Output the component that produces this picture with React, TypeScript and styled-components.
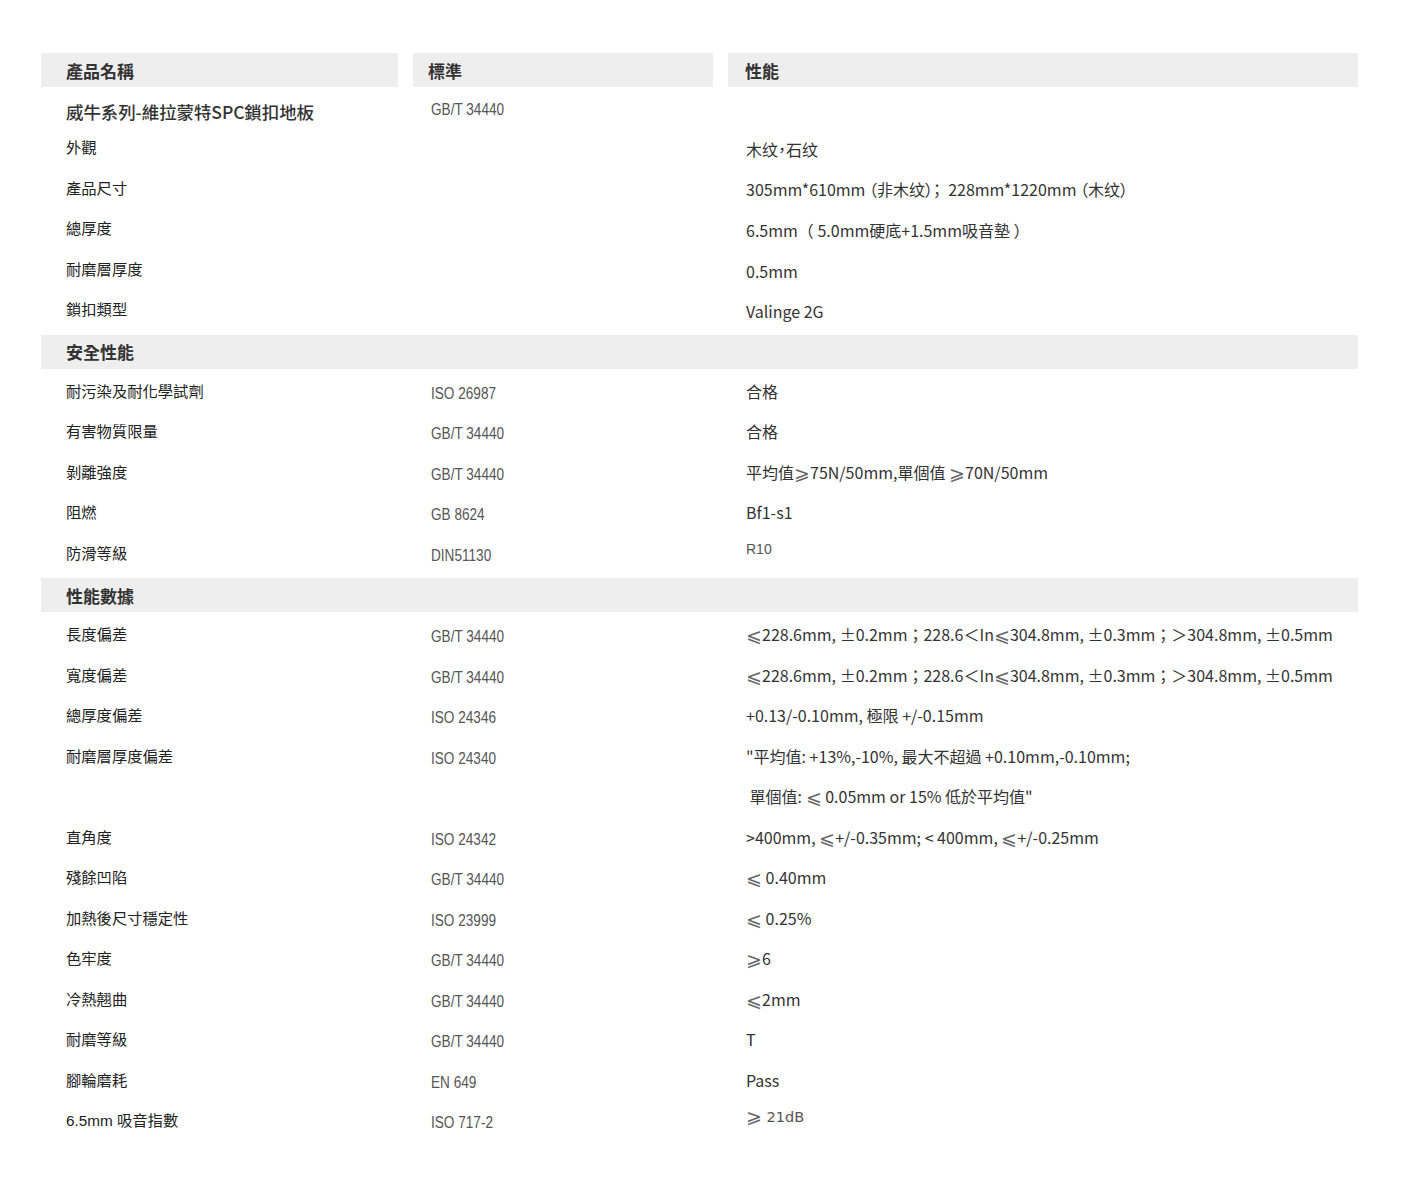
import React from 'react';
import styled, { createGlobalStyle } from 'styled-components';

const GlobalStyle = createGlobalStyle`
  html, body {
    margin: 0;
    padding: 0;
    background: #fff;
  }
  body {
    font-family: "Noto Sans CJK TC", "Noto Sans", sans-serif;
    color: #333;
  }
`;

const COLS = '357px 300px 630px';

const Page = styled.div`
  padding: 53px 48px 60px 41px;
`;

const Table = styled.div`
  width: 1317px;
  display: flex;
  flex-direction: column;
`;

const HeaderRow = styled.div`
  display: grid;
  grid-template-columns: ${COLS};
  column-gap: 15px;
  height: 34px;
`;

const HeaderCell = styled.div<{ $pad: number }>`
  background: #eeeeee;
  display: flex;
  align-items: center;
  padding-left: ${p => p.$pad}px;
  font-size: 17px;
  font-weight: 700;
  color: #333;
`;

const SectionRow = styled.div`
  background: #eeeeee;
  height: 34px;
  margin: 5px 0 2px;
  display: flex;
  align-items: center;
  padding-left: 25px;
  font-size: 17px;
  font-weight: 700;
  color: #333;
`;

const TitleRow = styled.div`
  display: grid;
  grid-template-columns: ${COLS};
  column-gap: 15px;
  height: 40px;
`;

const TitleName = styled.div`
  padding: 12px 0 0 25px;
  font-size: 17.5px;
  line-height: 26px;
  font-weight: 500;
  color: #333;
  letter-spacing: -0.1px;
`;

const TitleStd = styled.div`
  padding: 11px 0 0 18px;
  line-height: 20px;
`;

const DataRow = styled.div`
  display: grid;
  grid-template-columns: ${COLS};
  column-gap: 15px;
  height: 40.5px;
  align-items: center;
`;

const NameCell = styled.div`
  padding-left: 25px;
  font-family: "Liberation Sans", "Noto Sans CJK TC", sans-serif;
  font-size: 15.3px;
  color: #222;
  white-space: nowrap;
  transform: translateY(-1px);
`;

const StdCell = styled.div`
  padding-left: 18px;
  transform: translateY(1px);
`;

/* narrow grotesque look of the standards column */
const StdText = styled.span`
  display: inline-block;
  font-family: "Liberation Sans", sans-serif;
  font-size: 16px;
  color: #555;
  white-space: nowrap;
  transform: scaleX(0.85);
  transform-origin: left center;
`;

const ValueCell = styled.div<{ $font?: 'arial' | 'dejavu'; $shift?: number; $palt?: boolean }>`
  padding-left: 18px;
  font-family: ${p =>
    p.$font === 'arial'
      ? '"Liberation Sans", sans-serif'
      : p.$font === 'dejavu'
      ? '"DejaVu Sans", sans-serif'
      : '"Noto Sans CJK TC", "Noto Sans", "DejaVu Sans", sans-serif'};
  font-size: ${p => (p.$font === 'arial' ? '14px' : p.$font === 'dejavu' ? '14.5px' : '16px')};
  color: ${p => (p.$font ? '#555' : '#333')};
  white-space: pre;
  font-feature-settings: ${p => (p.$palt ? '"palt"' : 'normal')};
  transform: translateY(${p => p.$shift ?? 0}px);
`;

const Rel = styled.span`
  font-family: "DejaVu Sans", sans-serif;
  font-size: 19px;
  font-weight: 200;
  line-height: 0;
  vertical-align: -1px;
  color: #666;
`;

type Row = {
  name?: string;
  std?: string;
  value?: string;
  font?: 'arial' | 'dejavu';
  shift?: number;
  palt?: boolean;
};

const product: Row[] = [
  { name: '外觀', value: '木纹，石纹', shift: 2, palt: true },
  { name: '產品尺寸', value: '305mm*610mm （非木纹）；  228mm*1220mm （木纹）', shift: 1, palt: true },
  { name: '總厚度', value: '6.5mm（ 5.0mm硬底+1.5mm吸音墊 ）', shift: 2 },
  { name: '耐磨層厚度', value: '0.5mm', shift: 2 },
  { name: '鎖扣類型', value: 'Valinge 2G', shift: 2 },
];

const safety: Row[] = [
  { name: '耐污染及耐化學試劑', std: 'ISO 26987', value: '合格' },
  { name: '有害物質限量', std: 'GB/T 34440', value: '合格' },
  { name: '剝離強度', std: 'GB/T 34440', value: '平均值⩾75N/50mm,單個值 ⩾70N/50mm' },
  { name: '阻燃', std: 'GB 8624', value: 'Bf1-s1' },
  { name: '防滑等級', std: 'DIN51130', value: 'R10', font: 'arial', shift: -4 },
];

const tolerance = '⩽228.6mm, ±0.2mm；228.6＜In⩽304.8mm, ±0.3mm；＞304.8mm, ±0.5mm';

const performance: Row[] = [
  { name: '長度偏差', std: 'GB/T 34440', value: tolerance },
  { name: '寬度偏差', std: 'GB/T 34440', value: tolerance },
  { name: '總厚度偏差', std: 'ISO 24346', value: '+0.13/-0.10mm, 極限 +/-0.15mm' },
  { name: '耐磨層厚度偏差', std: 'ISO 24340', value: '"平均值: +13%,-10%, 最大不超過 +0.10mm,-0.10mm;' },
  { value: ' 單個值: ⩽ 0.05mm or 15% 低於平均值"' },
  { name: '直角度', std: 'ISO 24342', value: '>400mm, ⩽+/-0.35mm; < 400mm, ⩽+/-0.25mm' },
  { name: '殘餘凹陷', std: 'GB/T 34440', value: '⩽ 0.40mm' },
  { name: '加熱後尺寸穩定性', std: 'ISO 23999', value: '⩽ 0.25%' },
  { name: '色牢度', std: 'GB/T 34440', value: '⩾6' },
  { name: '冷熱翹曲', std: 'GB/T 34440', value: '⩽2mm' },
  { name: '耐磨等級', std: 'GB/T 34440', value: 'T' },
  { name: '腳輪磨耗', std: 'EN 649', value: 'Pass' },
  { name: '6.5mm 吸音指數', std: 'ISO 717-2', value: '⩾ 21dB', font: 'dejavu', shift: -3 },
];

// the slanted ⩽ / ⩾ signs come from DejaVu
const renderValue = (v?: string) =>
  v
    ? v.split(/([⩽⩾])/).map((part, i) =>
        part === '⩽' || part === '⩾' ? <Rel key={i}>{part}</Rel> : <React.Fragment key={i}>{part}</React.Fragment>
      )
    : null;

const Rows = ({ rows }: { rows: Row[] }) => (
  <>
    {rows.map((r, i) => (
      <DataRow key={i}>
        <NameCell>{r.name}</NameCell>
        <StdCell>{r.std && <StdText>{r.std}</StdText>}</StdCell>
        <ValueCell $font={r.font} $shift={r.shift} $palt={r.palt}>
          {renderValue(r.value)}
        </ValueCell>
      </DataRow>
    ))}
  </>
);

const App = () => (
  <Page>
    <GlobalStyle />
    <Table>
      <HeaderRow>
        <HeaderCell $pad={25}>產品名稱</HeaderCell>
        <HeaderCell $pad={15}>標準</HeaderCell>
        <HeaderCell $pad={17}>性能</HeaderCell>
      </HeaderRow>
      <TitleRow>
        <TitleName>威牛系列-維拉蒙特SPC鎖扣地板</TitleName>
        <TitleStd>
          <StdText>GB/T 34440</StdText>
        </TitleStd>
        <div />
      </TitleRow>
      <Rows rows={product} />
      <SectionRow>安全性能</SectionRow>
      <Rows rows={safety} />
      <SectionRow>性能數據</SectionRow>
      <Rows rows={performance} />
    </Table>
  </Page>
);

export default App;
